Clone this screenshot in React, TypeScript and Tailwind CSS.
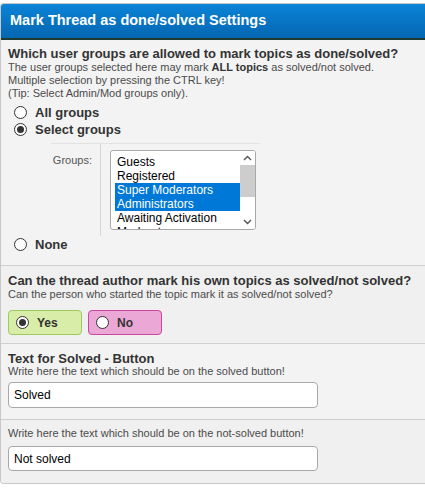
import React from 'react'

const FONT = { fontFamily: '"Liberation Sans", Arial, sans-serif' }

function Radio({ checked }: { checked?: boolean }) {
  return (
    <span className="w-[13px] h-[13px] rounded-full border border-[#333] bg-white flex items-center justify-center shrink-0">
      {checked && <span className="w-[7px] h-[7px] rounded-full bg-[#333]" />}
    </span>
  )
}

const GROUPS = [
  { name: 'Guests', sel: false },
  { name: 'Registered', sel: false },
  { name: 'Super Moderators', sel: true },
  { name: 'Administrators', sel: true },
  { name: 'Awaiting Activation', sel: false },
  { name: 'Moderators', sel: false },
]

export default function App() {
  return (
    <div className="w-[425px] h-[491px] bg-white pt-[3px]" style={FONT}>
      <div className="border border-[#c8c8c8] border-r-0 rounded-tl-[4px] rounded-bl-[4px] overflow-hidden">
        {/* header */}
        <div className="h-[36px] bg-gradient-to-b from-[#0b84d8] to-[#0566b1] border-b-2 border-[#1d3b33] flex items-center pl-[9px]">
          <h2 className="text-white font-bold text-[14.5px]">Mark Thread as done/solved Settings</h2>
        </div>

        {/* user groups */}
        <div className="bg-[#f3f3f3] px-[7px] pt-[6px] pb-[12px] border-b border-[#cfcfcf]">
          <h3 className="text-[13px] font-bold text-[#333] leading-[15px]">Which user groups are allowed to mark topics as done/solved?</h3>
          <p className="text-[11px] text-[#4b4b4b] leading-[13px]">
            The user groups selected here may mark <b className="text-[#333]">ALL topics</b> as solved/not solved.<br />
            Multiple selection by pressing the CTRL key!<br />
            (Tip: Select Admin/Mod groups only).
          </p>
          <div className="mt-[4px] pl-[6px] flex flex-col">
            <label className="flex items-center gap-[8px] h-[17px]">
              <Radio />
              <span className="text-[13px] font-bold text-[#333]">All groups</span>
            </label>
            <label className="flex items-center gap-[8px] h-[17px]">
              <Radio checked />
              <span className="text-[13px] font-bold text-[#333]">Select groups</span>
            </label>
          </div>
          <div className="ml-[43px] mr-[158px] mt-[5px] border-t border-[#e2e2e2] flex">
            <div className="w-[50px] border-r border-[#d8d8d8] pt-[8px] text-[11px] text-[#555] text-right pr-[8px]">Groups:</div>
            <div className="pl-[9px] pt-[6px] pb-[6px]">
              <div className="w-[146px] h-[80px] border border-[#a8a8a8] rounded-[3px] bg-white flex overflow-hidden">
                <div className="flex-1 pl-[4px] pt-[4px] overflow-hidden">
                  {GROUPS.map(g => (
                    <div key={g.name} className={`text-[12px] leading-[14px] pl-[2px] ${g.sel ? 'bg-[#0078d7] text-white' : 'text-black'}`}>{g.name}</div>
                  ))}
                </div>
                <div className="w-[15px] flex flex-col items-center bg-white">
                  <svg width="9" height="14" viewBox="0 0 9 14"><path d="M1 9 L4.5 5.5 L8 9" fill="none" stroke="#555" strokeWidth="1.4" /></svg>
                  <div className="w-[15px] h-[32px] bg-[#cdcdcd]" />
                  <div className="flex-1" />
                  <svg width="9" height="14" viewBox="0 0 9 14"><path d="M1 5 L4.5 8.5 L8 5" fill="none" stroke="#555" strokeWidth="1.4" /></svg>
                </div>
              </div>
            </div>
          </div>
          <label className="pl-[6px] flex items-center gap-[8px] h-[17px]">
            <Radio />
            <span className="text-[13px] font-bold text-[#333]">None</span>
          </label>
        </div>

        {/* author */}
        <div className="bg-[#f0f0f0] px-[7px] pt-[7px] pb-[8px] border-b border-[#cfcfcf]">
          <h3 className="text-[13px] font-bold text-[#333] leading-[15px]">Can the thread author mark his own topics as solved/not solved?</h3>
          <p className="text-[11px] text-[#4b4b4b] leading-[13px]">Can the person who started the topic mark it as solved/not solved?</p>
          <div className="flex gap-[6px] mt-[9px]">
            <label className="w-[74px] h-[25px] rounded-[4px] bg-[#d8eda8] border border-[#9ccc5c] flex items-center gap-[8px] pl-[7px]">
              <Radio checked />
              <span className="text-[12px] font-bold text-[#333]">Yes</span>
            </label>
            <label className="w-[74px] h-[25px] rounded-[4px] bg-[#eba7d6] border border-[#c8479c] flex items-center gap-[8px] pl-[7px]">
              <Radio />
              <span className="text-[12px] font-bold text-[#333]">No</span>
            </label>
          </div>
        </div>

        {/* solved text */}
        <div className="bg-[#f3f3f3] px-[7px] pt-[8px] pb-[11px] border-b border-[#cfcfcf]">
          <h3 className="text-[13px] font-bold text-[#333] leading-[13px]">Text for Solved - Button</h3>
          <p className="text-[11px] text-[#4b4b4b] leading-[13px]">Write here the text which should be on the solved button!</p>
          <input defaultValue="Solved" className="mt-[4px] w-[310px] h-[26px] border border-[#a8a8a8] rounded-[4px] bg-white px-[5px] text-[12px] text-black outline-none" style={FONT} />
        </div>

        {/* not solved text */}
        <div className="bg-[#f0f0f0] px-[7px] pt-[7px] pb-[12px]">
          <p className="text-[11px] text-[#4b4b4b] leading-[13px]">Write here the text which should be on the not-solved button!</p>
          <input defaultValue="Not solved" className="mt-[6px] w-[310px] h-[25px] border border-[#a8a8a8] rounded-[4px] bg-white px-[5px] text-[12px] text-black outline-none" style={FONT} />
        </div>
      </div>
    </div>
  )
}
